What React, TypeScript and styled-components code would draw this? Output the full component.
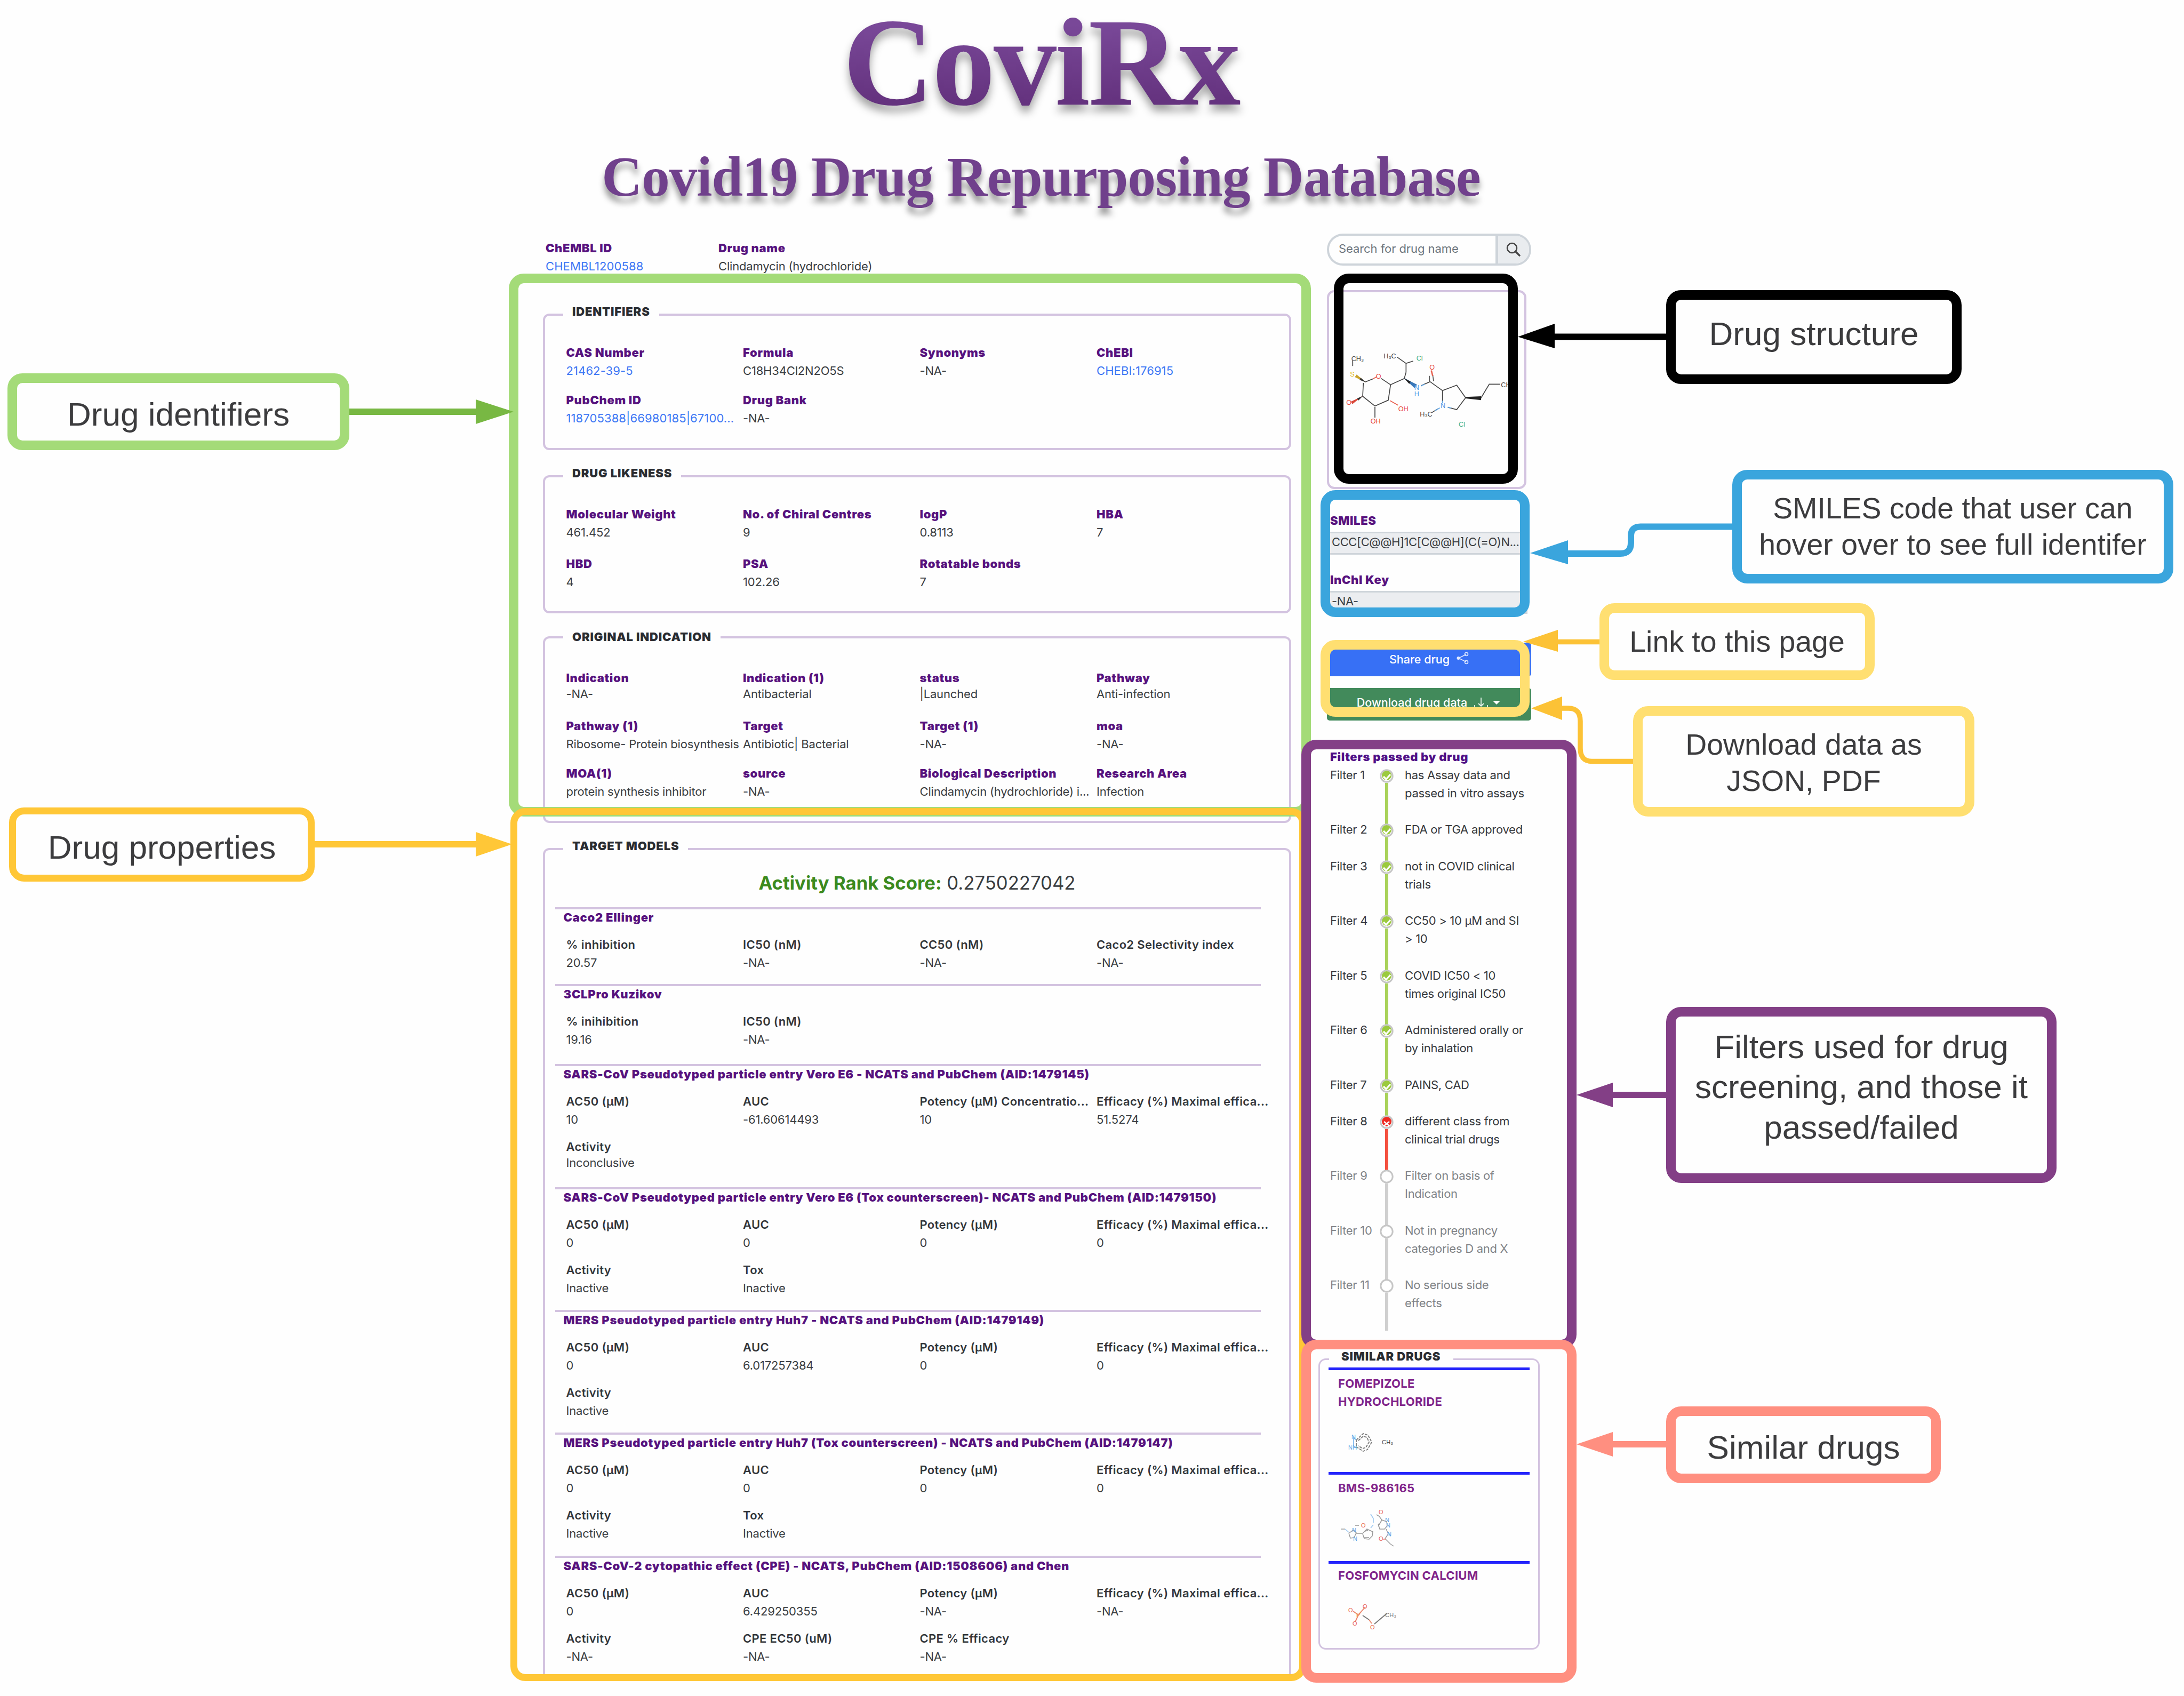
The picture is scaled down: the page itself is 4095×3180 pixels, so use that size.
import React from "react";
import styled, { createGlobalStyle } from "styled-components";

type Field = { label: string; value: string; link?: boolean; tight?: boolean };
type Status = "passed" | "failed" | "pending";

const identifiers: Field[] = [
  { label: "CAS Number", value: "21462-39-5", link: true },
  { label: "Formula", value: "C18H34Cl2N2O5S" },
  { label: "Synonyms", value: "-NA-" },
  { label: "ChEBI", value: "CHEBI:176915", link: true },
  { label: "PubChem ID", value: "118705388|66980185|67100...", link: true },
  { label: "Drug Bank", value: "-NA-" },
];

const likeness: Field[] = [
  { label: "Molecular Weight", value: "461.452" },
  { label: "No. of Chiral Centres", value: "9" },
  { label: "logP", value: "0.8113" },
  { label: "HBA", value: "7" },
  { label: "HBD", value: "4" },
  { label: "PSA", value: "102.26" },
  { label: "Rotatable bonds", value: "7" },
];

const indication: Field[] = [
  { label: "Indication", value: "-NA-", tight: true },
  { label: "Indication (1)", value: "Antibacterial", tight: true },
  { label: "status", value: "|Launched", tight: true },
  { label: "Pathway", value: "Anti-infection", tight: true },
  { label: "Pathway (1)", value: "Ribosome- Protein biosynthesis" },
  { label: "Target", value: "Antibiotic| Bacterial" },
  { label: "Target (1)", value: "-NA-" },
  { label: "moa", value: "-NA-" },
  { label: "MOA(1)", value: "protein synthesis inhibitor" },
  { label: "source", value: "-NA-" },
  { label: "Biological Description", value: "Clindamycin (hydrochloride) i..." },
  { label: "Research Area", value: "Infection" },
];

const models: { title: string; height: number; fields: Field[] }[] = [
  {
    title: "Caco2 Ellinger",
    height: 144,
    fields: [
      { label: "% inhibition", value: "20.57" },
      { label: "IC50 (nM)", value: "-NA-" },
      { label: "CC50 (nM)", value: "-NA-" },
      { label: "Caco2 Selectivity index", value: "-NA-" },
    ],
  },
  {
    title: "3CLPro Kuzikov",
    height: 150,
    fields: [
      { label: "% inihibition", value: "19.16" },
      { label: "IC50 (nM)", value: "-NA-" },
    ],
  },
  {
    title: "SARS-CoV Pseudotyped particle entry Vero E6 - NCATS and PubChem (AID:1479145)",
    height: 231,
    fields: [
      { label: "AC50 (µM)", value: "10" },
      { label: "AUC", value: "-61.60614493" },
      { label: "Potency (µM) Concentratio...", value: "10" },
      { label: "Efficacy (%) Maximal effica...", value: "51.5274" },
      { label: "Activity", value: "Inconclusive", tight: true },
    ],
  },
  {
    title:
      "SARS-CoV Pseudotyped particle entry Vero E6 (Tox counterscreen)- NCATS and PubChem (AID:1479150)",
    height: 230,
    fields: [
      { label: "AC50 (µM)", value: "0" },
      { label: "AUC", value: "0" },
      { label: "Potency (µM)", value: "0" },
      { label: "Efficacy (%) Maximal effica...", value: "0" },
      { label: "Activity", value: "Inactive" },
      { label: "Tox", value: "Inactive" },
    ],
  },
  {
    title: "MERS Pseudotyped particle entry Huh7 - NCATS and PubChem (AID:1479149)",
    height: 230,
    fields: [
      { label: "AC50 (µM)", value: "0" },
      { label: "AUC", value: "6.017257384" },
      { label: "Potency (µM)", value: "0" },
      { label: "Efficacy (%) Maximal effica...", value: "0" },
      { label: "Activity", value: "Inactive" },
    ],
  },
  {
    title:
      "MERS Pseudotyped particle entry Huh7 (Tox counterscreen) - NCATS and PubChem (AID:1479147)",
    height: 231,
    fields: [
      { label: "AC50 (µM)", value: "0" },
      { label: "AUC", value: "0" },
      { label: "Potency (µM)", value: "0" },
      { label: "Efficacy (%) Maximal effica...", value: "0" },
      { label: "Activity", value: "Inactive" },
      { label: "Tox", value: "Inactive" },
    ],
  },
  {
    title: "SARS-CoV-2 cytopathic effect (CPE) - NCATS, PubChem (AID:1508606) and Chen",
    height: 222,
    fields: [
      { label: "AC50 (µM)", value: "0" },
      { label: "AUC", value: "6.429250355" },
      { label: "Potency (µM)", value: "-NA-" },
      { label: "Efficacy (%) Maximal effica...", value: "-NA-" },
      { label: "Activity", value: "-NA-" },
      { label: "CPE EC50 (uM)", value: "-NA-" },
      { label: "CPE % Efficacy", value: "-NA-" },
    ],
  },
];

const filters: { status: Status; lines: string[] }[] = [
  { status: "passed", lines: ["has Assay data and", "passed in vitro assays"] },
  { status: "passed", lines: ["FDA or TGA approved"] },
  { status: "passed", lines: ["not in COVID clinical", "trials"] },
  { status: "passed", lines: ["CC50 > 10 µM and SI", "> 10"] },
  { status: "passed", lines: ["COVID IC50 < 10", "times original IC50"] },
  { status: "passed", lines: ["Administered orally or", "by inhalation"] },
  { status: "passed", lines: ["PAINS, CAD"] },
  { status: "failed", lines: ["different class from", "clinical trial drugs"] },
  { status: "pending", lines: ["Filter on basis of", "Indication"] },
  { status: "pending", lines: ["Not in pregnancy", "categories D and X"] },
  { status: "pending", lines: ["No serious side", "effects"] },
];

const green = "#a4db78";
const orange = "#ffc737";
const yellow = "#ffdf71";
const blue = "#3aa5dd";
const purple = "#833f86";
const coral = "#ff8f80";

const frames = [
  { x: 954, y: 513, w: 1504, h: 1018, color: green, line: 18 },
  { x: 957, y: 1515, w: 1492, h: 1637, color: orange, line: 13 },
  { x: 2501, y: 513, w: 345, h: 394, color: "#000", line: 18.5 },
  { x: 2476, y: 919, w: 392, h: 238, color: blue, line: 18.5 },
  { x: 2476, y: 1200, w: 392, h: 144, color: yellow, line: 18.5 },
  { x: 2440, y: 1387, w: 516, h: 1143, color: purple, line: 18 },
  { x: 2440, y: 2512, w: 516, h: 643, color: coral, line: 18.5 },
];

const callouts = [
  { x: 14, y: 700, w: 641, h: 144, color: green, line: 18.5, size: 62, nudge: 5, lines: ["Drug identifiers"] },
  { x: 17, y: 1514, w: 573, h: 139, color: orange, line: 13, size: 62, nudge: 5, lines: ["Drug properties"] },
  { x: 3124, y: 544, w: 554, h: 176, color: "#000", line: 18.5, size: 62, nudge: -6, lines: ["Drug structure"] },
  {
    x: 3248, y: 881, w: 827, h: 213, color: blue, line: 18.5, size: 55.4, nudge: 0,
    lines: ["SMILES code that user can", "hover over to see full identifer"],
  },
  { x: 2999, y: 1131, w: 516, h: 144, color: yellow, line: 18.5, size: 55.4, nudge: 1, lines: ["Link to this page"] },
  {
    x: 3062, y: 1324, w: 640, h: 207, color: yellow, line: 18.5, size: 55.4, nudge: 3,
    lines: ["Download data as", "JSON, PDF"],
  },
  {
    x: 3124, y: 1888, w: 732, h: 330, color: purple, line: 18.5, size: 62, nudge: -15,
    lines: ["Filters used for drug", "screening, and those it", "passed/failed"],
  },
  { x: 3124, y: 2637, w: 515, h: 144, color: coral, line: 18.5, size: 62, nudge: 5, lines: ["Similar drugs"] },
];

const Fields = ({ items, plain, gap }: { items: Field[]; plain?: boolean; gap: number }) => (
  <FieldGrid $gap={gap}>
    {items.map((item) => (
      <div key={item.label}>
        <Label $plain={plain}>{item.label}</Label>
        <Value $link={item.link} $tight={item.tight}>
          {item.value}
        </Value>
      </div>
    ))}
  </FieldGrid>
);

const DrugStructure = () => (
  <StructureSvg viewBox="217 385 1098 1092">
    <g fill="none" stroke="#444" strokeWidth="5">
      <path d="M350 770V800M420 890L465 872M510 870L563 905M410 895L406 970L475 1025L550 992L563 905L640 870M650 785V835M640 870L650 835M600 750L650 785L690 772M735 910L785 888L855 938L935 908L985 978L935 1045L885 1032M855 938V1000M1070 982L1118 902H1180M830 1040L795 1062M475 1030V1090" />
      <path d="M782 855V890M800 850L805 885" stroke="#555" />
      <path d="M465 872L485 860M560 995L605 1020M345 1002L375 988" stroke="#e8604f" />
      <path d="M855 995V1010M840 1035L815 1050M885 1032L905 1036M735 912L755 902" stroke="#62a8e8" />
      <path d="M792 825L800 855" stroke="#e8604f" strokeWidth="8" />
    </g>
    <path d="M425 892L372 848L362 862Z" fill="#c9a227" />
    <path d="M425 892L395 866L388 878Z" fill="#333" />
    <path d="M408 968L340 1000L348 1014Z" fill="#d9483a" />
    <path d="M408 968L375 982L382 994Z" fill="#333" />
    <path d="M636 866L712 905L698 924Z" fill="#3b78b8" />
    <path d="M636 866L676 888L668 900Z" fill="#222" />
    <path d="M985 974L1072 970V992L985 982Z" fill="#222" />
    <Atom x="342" y="772" fill="#444">CH₃</Atom>
    <Atom x="524" y="756" fill="#444">H₃C</Atom>
    <Atom x="708" y="768" fill="#3fae85">Cl</Atom>
    <Atom x="335" y="860" fill="#e0b71b">S</Atom>
    <Atom x="480" y="870" fill="#e8483a">O</Atom>
    <Atom x="782" y="820" fill="#e8483a">O</Atom>
    <Atom x="696" y="935" fill="#4c9be6">N</Atom>
    <Atom x="696" y="970" fill="#4c9be6">H</Atom>
    <Atom x="844" y="1036" fill="#4c9be6">N</Atom>
    <Atom x="728" y="1084" fill="#444">H₃C</Atom>
    <Atom x="314" y="1018" fill="#e8483a">O</Atom>
    <Atom x="606" y="1054" fill="#e8483a">OH</Atom>
    <Atom x="450" y="1122" fill="#e8483a">OH</Atom>
    <Atom x="1184" y="918" fill="#444">CH₃</Atom>
    <Atom x="946" y="1140" fill="#3fae85">Cl</Atom>
  </StructureSvg>
);

const App = () => {
  return (
    <Page>
      <GlobalStyle />
      <Header>
        <Title>CoviRx</Title>
        <Subtitle>Covid19 Drug Repurposing Database</Subtitle>
      </Header>

      <Content>
        <MainColumn>
          <IdRow>
            <div>
              <Label>ChEMBL ID</Label>
              <Value $link>CHEMBL1200588</Value>
            </div>
            <div>
              <Label>Drug name</Label>
              <Value>Clindamycin (hydrochloride)</Value>
            </div>
          </IdRow>

          <Panel $top={57} $inner={37} $bottom={39}>
            <PanelLegend>IDENTIFIERS</PanelLegend>
            <Fields items={identifiers} gap={21} />
          </Panel>
          <Panel $top={32} $inner={37} $bottom={38}>
            <PanelLegend>DRUG LIKENESS</PanelLegend>
            <Fields items={likeness} gap={25} />
          </Panel>
          <Panel $top={28} $inner={42} $bottom={38}>
            <PanelLegend $level>ORIGINAL INDICATION</PanelLegend>
            <Fields items={indication} gap={21.5} />
          </Panel>
          <Panel $top={32} $inner={22} $bottom={0} $open>
            <PanelLegend>TARGET MODELS</PanelLegend>
            <Score>
              <b>Activity Rank Score:</b> 0.2750227042
            </Score>
            {models.map((model) => (
              <Model key={model.title} $height={model.height}>
                <ModelTitle>{model.title}</ModelTitle>
                <Fields items={model.fields} plain gap={17} />
              </Model>
            ))}
          </Panel>
        </MainColumn>

        <SideColumn>
          <Search>
            <SearchInput>Search for drug name</SearchInput>
            <SearchButton>
              <svg width="28" height="28" viewBox="0 0 28 28">
                <circle cx="11" cy="11" r="9" fill="none" stroke="#444" strokeWidth="2.6" />
                <path d="M17.5 17.5L26 26" stroke="#444" strokeWidth="3.4" />
              </svg>
            </SearchButton>
          </Search>

          <StructureBox>
            <DrugStructure />
          </StructureBox>

          <CodeLabel $top={42}>SMILES</CodeLabel>
          <CodeBox>CCC[C@@H]1C[C@@H](C(=O)N...</CodeBox>
          <CodeLabel $top={30}>InChI Key</CodeLabel>
          <CodeBox>-NA-</CodeBox>

          <ShareButton>
            Share drug
            <svg width="24" height="24" viewBox="0 0 24 24">
              <path d="M19 5L5 12L19 19" fill="none" stroke="#dfe8ff" strokeWidth="1.6" />
              <circle cx="19.5" cy="4.5" r="3" fill="none" stroke="#dfe8ff" strokeWidth="1.6" />
              <circle cx="19.5" cy="19.5" r="3" fill="none" stroke="#dfe8ff" strokeWidth="1.6" />
              <circle cx="4.5" cy="12" r="3" fill="#dfe8ff" />
            </svg>
          </ShareButton>
          <DownloadButton>
            Download drug data
            <svg width="52" height="24" viewBox="0 0 52 24">
              <path d="M14 1V17M9 12L14 17L19 12M2 15V21H26V15" fill="none" stroke="#e6f2ea" strokeWidth="1.8" />
              <path d="M36 7H50L43 14Z" fill="#fff" />
            </svg>
          </DownloadButton>

          <FiltersTitle>Filters passed by drug</FiltersTitle>
          <FilterList>
            {filters.map((filter, index) => (
              <FilterRow key={filter.lines[0]} $muted={filter.status === "pending"}>
                <span>Filter {index + 1}</span>
                <Rail $status={filter.status}>
                  <svg width="26" height="26" viewBox="0 0 26 26">
                    <circle cx="13" cy="13" r="11.2" fill="#fff" stroke="#c6c6c6" strokeWidth="3" />
                    {filter.status === "passed" && (
                      <>
                        <circle cx="13" cy="12" r="9" fill="#9bca3e" />
                        <path d="M7 14L12 19L20 10" fill="none" stroke="#fff" strokeWidth="3.2" />
                      </>
                    )}
                    {filter.status === "failed" && (
                      <>
                        <circle cx="13" cy="12" r="9" fill="#ee2b22" />
                        <path d="M8 12L18 20M18 12L8 20" stroke="#fff" strokeWidth="2.4" />
                      </>
                    )}
                  </svg>
                </Rail>
                <FilterText>
                  {filter.lines.map((line) => (
                    <div key={line}>{line}</div>
                  ))}
                </FilterText>
              </FilterRow>
            ))}
          </FilterList>

          <SimilarPanel>
            <SimilarLegend>SIMILAR DRUGS</SimilarLegend>
            <SimilarDrug $height={196.5}>
              FOMEPIZOLE
              <br />
              HYDROCHLORIDE
              <svg width="120" height="100" viewBox="0 0 120 100">
                <g fill="none" stroke="#777" strokeWidth="1.8" strokeDasharray="5 2">
                  <path d="M34 55L47 43L56 46L63 59L55 73L47 76L34 68Z" />
                  <path d="M38 56L47 48L54 50L58 59L52 69L46 71L38 66" />
                </g>
                <path d="M34 55L29 51V66L34 70" fill="none" stroke="#8ec0ee" strokeWidth="2" />
                <MiniAtom x="25" y="53" fill="#5aa6e6">N</MiniAtom>
                <MiniAtom x="19" y="73" fill="#5aa6e6">NH</MiniAtom>
                <MiniAtom x="82" y="63" fill="#444">CH₃</MiniAtom>
              </svg>
            </SimilarDrug>
            <SimilarDrug $height={166.5}>
              BMS-986165
              <svg width="120" height="110" viewBox="0 0 120 110">
                <g fill="none" stroke="#999" strokeWidth="1.5">
                  <path d="M5 60H13M20 68L28 62L34 67L30 76L23 77L20 68M34 68H46L54 60L65 65L64 73L58 79L49 78L46 69M32 53H39M75 55L82 43L91 46L92 54L87 60H78L75 50M82 43L77 36L72 33M90 60L94 69L88 78L98 88L104 92" />
                  <path d="M49 76H58M51 64L56 62" />
                </g>
                <path d="M13 60L20 66M61 58L66 52M66 48V40L61 32M94 66L98 74" fill="none" stroke="#9cc7f0" strokeWidth="1.6" />
                <MiniAtom x="26" y="66" fill="#5aa6e6">N</MiniAtom>
                <MiniAtom x="28" y="82" fill="#5aa6e6">N</MiniAtom>
                <MiniAtom x="88" y="47" fill="#5aa6e6">N</MiniAtom>
                <MiniAtom x="90" y="57" fill="#5aa6e6">N</MiniAtom>
                <MiniAtom x="92" y="73" fill="#5aa6e6">N</MiniAtom>
                <MiniAtom x="43" y="57" fill="#e8604f">O</MiniAtom>
                <MiniAtom x="76" y="32" fill="#e8604f">O</MiniAtom>
                <MiniAtom x="76" y="82" fill="#e8604f">O</MiniAtom>
                <path d="M84 79H90" stroke="#e88a80" strokeWidth="1.6" />
              </svg>
            </SimilarDrug>
            <SimilarDrug $height={163} $tight>
              FOSFOMYCIN CALCIUM
              <svg width="120" height="110" viewBox="0 0 120 110">
                <g fill="none" strokeWidth="2">
                  <path d="M28 50L38 57L51 42M38 57L32 70" stroke="#ec8a70" />
                  <path d="M46 58L58 66M68 74L88 57L92 54" stroke="#777" />
                  <path d="M58 66L63 73" stroke="#ec8a70" />
                </g>
                <MiniAtom x="19" y="52" fill="#e8604f">O</MiniAtom>
                <MiniAtom x="46" y="45" fill="#e8604f">O</MiniAtom>
                <MiniAtom x="34" y="61" fill="#ef8a3a">P</MiniAtom>
                <MiniAtom x="27" y="77" fill="#e8604f">O</MiniAtom>
                <MiniAtom x="60" y="84" fill="#e8604f">O</MiniAtom>
                <MiniAtom x="88" y="61" fill="#777">CH₃</MiniAtom>
              </svg>
            </SimilarDrug>
          </SimilarPanel>
        </SideColumn>
      </Content>

      {frames.map((frame) => (
        <Frame key={frame.y + frame.color} $x={frame.x} $y={frame.y} $w={frame.w} $h={frame.h} $color={frame.color} $line={frame.line} />
      ))}

      <Connectors viewBox="0 0 4095 3180">
        <g fill="none">
          <path d="M655 772H900" stroke="#78b843" strokeWidth="12" />
          <path d="M590 1583H900" stroke={orange} strokeWidth="12" />
          <path d="M3130 631.5H2910" stroke="#000" strokeWidth="12" />
          <path d="M3250 987.5H3076Q3058 987.5 3058 1005V1018Q3058 1038 3038 1038H2930" stroke={blue} strokeWidth="12" />
          <path d="M3001 1203.5H2915" stroke="#fcc236" strokeWidth="9.5" />
          <path d="M3064 1427.5H2985Q2963 1427.5 2963 1403V1352Q2963 1328 2941 1328H2920" stroke="#fcc236" strokeWidth="9.5" />
          <path d="M3130 2053H3015" stroke={purple} strokeWidth="12" />
          <path d="M3130 2708H3015" stroke={coral} strokeWidth="12" />
        </g>
        <path d="M963 772L892 749V795Z" fill="#78b843" />
        <path d="M960 1583L892 1560V1606Z" fill={orange} />
        <path d="M2846 631.5L2915 607V653Z" fill="#000" />
        <path d="M2869 1037L2940 1013V1058Z" fill={blue} />
        <path d="M2856 1203L2921 1181V1222Z" fill="#fcc236" />
        <path d="M2871 1328L2929 1306V1350Z" fill="#fcc236" />
        <path d="M2956 2053L3024 2030V2076Z" fill={purple} />
        <path d="M2956 2708L3024 2685V2731Z" fill={coral} />
      </Connectors>

      {callouts.map((callout) => (
        <Callout
          key={callout.lines[0]}
          $x={callout.x}
          $y={callout.y}
          $w={callout.w}
          $h={callout.h}
          $color={callout.color}
          $line={callout.line}
          $size={callout.size}
          $nudge={callout.nudge}
        >
          {callout.lines.map((line) => (
            <span key={line}>{line}</span>
          ))}
        </Callout>
      ))}
    </Page>
  );
};

export default App;

const GlobalStyle = createGlobalStyle`
  * {
    box-sizing: border-box;
  }

  body {
    margin: 0;
    background: #fefefe;
  }
`;

const Page = styled.main`
  position: relative;
  width: 4095px;
  height: 3180px;
  background: #fefefe;
  color: #3a3d41;
  font-family: Inter, "Liberation Sans", sans-serif;
  font-size: 22px;
  line-height: 34px;
  white-space: nowrap;
`;

const Header = styled.header`
  width: 3904px;
  height: 384px;
  text-align: center;
  font-family: "Liberation Serif", serif;
`;

const Title = styled.h1`
  margin: 0;
  background: linear-gradient(#794898 20%, #65337f 80%);
  background-clip: text;
  color: transparent;
  font-size: 236px;
  font-weight: 700;
  line-height: 234px;
  letter-spacing: -2.9px;
  filter: drop-shadow(0 12px 8px rgba(0, 0, 0, 0.36));
`;

const Subtitle = styled.h2`
  margin: 46px 0 0;
  color: #70408c;
  font-size: 105px;
  font-weight: 700;
  line-height: 104px;
  letter-spacing: -0.9px;
  text-shadow: 0 12px 12px rgba(0, 0, 0, 0.4);
`;

const Content = styled.div`
  display: flex;
  gap: 67px;
  padding: 54px 0 0 1018px;
`;

const MainColumn = styled.div`
  width: 1403px;
  padding-top: 10px;
`;

const IdRow = styled.div`
  display: grid;
  grid-template-columns: 324px 1fr;
  padding-left: 5px;
`;

const Label = styled.div<{ $plain?: boolean }>`
  color: ${({ $plain }) => ($plain ? "#33363a" : "#57127e")};
  font-weight: ${({ $plain }) => ($plain ? 600 : 900)};
  letter-spacing: ${({ $plain }) => ($plain ? 0.33 : 0.65)}px;
`;

const Value = styled.div<{ $link?: boolean; $tight?: boolean }>`
  color: ${({ $link }) => ($link ? "#3d77f5" : "inherit")};
  margin: ${({ $tight }) => ($tight ? "-4px 0 4px" : "0")};
  letter-spacing: ${({ $link }) => ($link ? 0.1 : -0.17)}px;
`;

const FieldGrid = styled.div<{ $gap: number }>`
  display: grid;
  grid-template-columns: repeat(4, 331.5px);
  row-gap: ${({ $gap }) => $gap}px;
`;

const Panel = styled.fieldset<{ $top: number; $inner: number; $bottom: number; $open?: boolean }>`
  min-width: 0;
  margin: ${({ $top }) => $top}px 0 0;
  padding: ${({ $inner, $bottom }) => `${$inner}px 0 ${$bottom}px`};
  border: 4px solid #d3c3e0;
  border-bottom-width: ${({ $open }) => ($open ? 0 : 4)}px;
  border-radius: ${({ $open }) => ($open ? "12px 12px 0 0" : "12px")};
  height: ${({ $open }) => ($open ? "1566px" : "auto")};

  > ${FieldGrid} {
    padding-left: 39.5px;
  }
`;

const PanelLegend = styled.legend<{ $level?: boolean }>`
  margin-left: 34px;
  padding: ${({ $level }) => ($level ? "5px 17px 7px" : "0 17px 12px")};
  color: #2a2c31;
  font-size: 22px;
  font-weight: 900;
  line-height: 22px;
  letter-spacing: 0.85px;
`;

const Score = styled.div`
  margin-bottom: 22px;
  text-align: center;
  font-size: 34.7px;
  line-height: 48px;

  b {
    color: #3c8a1e;
    font-weight: 700;
  }
`;

const Model = styled.section<{ $height: number }>`
  width: 1323.5px;
  height: ${({ $height }) => $height}px;
  margin-left: 18.5px;
  border-top: 4px solid #d3c3e0;

  > ${FieldGrid} {
    padding-left: 21px;
  }
`;

const ModelTitle = styled.h4`
  margin: -2px 0 17px;
  padding-left: 16px;
  color: #57127e;
  font-size: 22px;
  font-weight: 900;
  line-height: 34px;
  letter-spacing: 0.71px;
`;

const SideColumn = styled.aside`
  width: 383px;
`;

const Search = styled.div`
  display: flex;
  height: 60px;
  border: 4px solid #ced4da;
  border-radius: 30px;
  overflow: hidden;
`;

const SearchInput = styled.div`
  flex: 1;
  padding-left: 18px;
  color: #6c757d;
  line-height: 48px;
  letter-spacing: -0.08px;
`;

const SearchButton = styled.div`
  display: flex;
  align-items: center;
  width: 63px;
  padding-left: 15px;
  border-left: 5px solid #ced4da;
  background: #e9ecef;
`;

const StructureBox = styled.div`
  width: 374px;
  height: 373px;
  margin-top: 46px;
  border: 4px solid #d3c3e0;
  border-radius: 14px;
  overflow: hidden;
`;

const StructureSvg = styled.svg`
  display: block;
  width: 366px;
  height: 364px;
`;

const Atom = styled.text`
  font-family: "Liberation Sans", sans-serif;
  font-size: 38px;
`;

const MiniAtom = styled.text`
  font-family: "Liberation Sans", sans-serif;
  font-size: 11px;
  font-weight: 400;
`;

const CodeLabel = styled(Label)<{ $top: number }>`
  margin: ${({ $top }) => $top}px 0 4px 6px;
`;

const CodeBox = styled.div`
  width: 376px;
  height: 43px;
  padding-left: 6px;
  border: 3px solid #ced4da;
  background: #ebedf0;
  line-height: 32px;
  letter-spacing: -0.4px;
`;

const ActionButton = styled.div`
  display: flex;
  justify-content: center;
  width: 383px;
  color: #fff;
  font-size: 21.5px;
  font-weight: 500;
  border-radius: 5px;

  svg {
    margin: 17px 0 0 12px;
  }
`;

const ShareButton = styled(ActionButton)`
  height: 63px;
  margin-top: 54px;
  background: #3770f5;
  line-height: 62px;
`;

const DownloadButton = styled(ActionButton)`
  height: 61px;
  margin-top: 22px;
  background: #428a5b;
  line-height: 54px;
`;

const FiltersTitle = styled.h3`
  margin: 52px 0 0 6px;
  color: #4f0f86;
  font-size: 22px;
  font-weight: 900;
  line-height: 33px;
  letter-spacing: 0.65px;
`;

const FilterList = styled.div`
  margin-left: 6px;
  line-height: 34.15px;
  letter-spacing: -0.28px;
`;

const railColors = { passed: "#a9d25a", failed: "#f4503f", pending: "#cfcfcf" };

const Rail = styled.div<{ $status: Status }>`
  position: relative;
  display: flex;
  flex-direction: column;
  align-items: center;
  padding-top: 6px;
  margin-bottom: -8px;

  svg {
    flex: none;
    position: relative;
    z-index: 1;
  }

  &::after {
    content: "";
    flex: 1;
    width: 6px;
    background: ${({ $status }) => railColors[$status]};
  }
`;

const FilterRow = styled.div<{ $muted: boolean }>`
  display: grid;
  grid-template-columns: 93px 26px 1fr;
  color: ${({ $muted }) => ($muted ? "#808387" : "#36393d")};

  &:last-child ${Rail} {
    margin-bottom: 0;
  }
`;

const FilterText = styled.div`
  padding: 0 0 34.15px 21px;
`;

const SimilarPanel = styled.fieldset`
  width: 415px;
  margin: 37px 0 0 -16px;
  padding: 0 16px;
  border: 3.5px solid #d3c3e0;
  border-radius: 14px;
`;

const SimilarLegend = styled(PanelLegend)`
  margin-left: 1px;
  padding: 0 24px 12px 23px;
`;

const SimilarDrug = styled.div<{ $height: number; $tight?: boolean }>`
  height: ${({ $height }) => $height}px;
  padding: ${({ $tight }) => ($tight ? 5 : 8)}px 0 0 18px;
  border-top: 5px solid #2424fb;
  color: #80248a;
  font-size: 22px;
  font-weight: 700;
  letter-spacing: 0.3px;

  &:first-of-type {
    margin-top: -2px;
  }

  svg {
    display: block;
  }
`;

const Frame = styled.div<{ $x: number; $y: number; $w: number; $h: number; $color: string; $line: number }>`
  position: absolute;
  left: ${({ $x }) => $x}px;
  top: ${({ $y }) => $y}px;
  width: ${({ $w }) => $w}px;
  height: ${({ $h }) => $h}px;
  border: ${({ $line, $color }) => `${$line}px solid ${$color}`};
  border-radius: 28px;
`;

const Callout = styled(Frame)<{ $size: number; $nudge: number }>`
  display: flex;
  flex-direction: column;
  align-items: center;
  justify-content: center;
  padding: ${({ $nudge }) => `${Math.max(0, $nudge * 2)}px 0 ${Math.max(0, -$nudge * 2)}px`};
  background: #fefefe;
  color: #3c3c3e;
  font-family: "Liberation Sans", sans-serif;
  font-size: ${({ $size }) => $size}px;
  line-height: 1.21;
`;

const Connectors = styled.svg`
  position: absolute;
  inset: 0;
  width: 4095px;
  height: 3180px;
`;
